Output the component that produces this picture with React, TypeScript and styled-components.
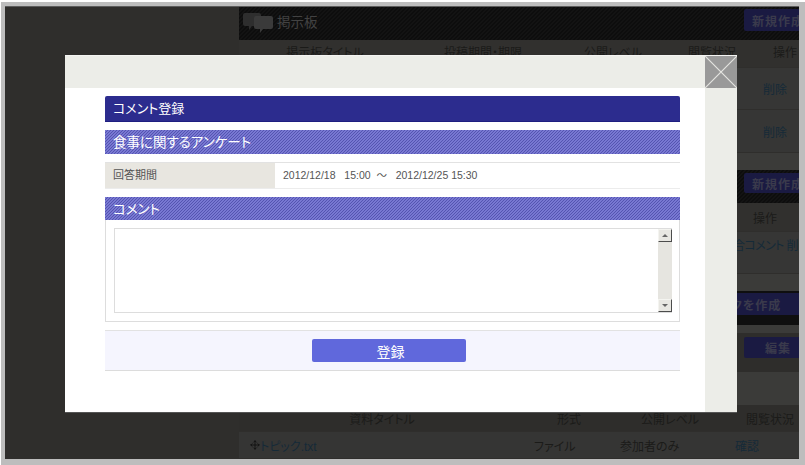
import * as React from 'react';
import styled, { createGlobalStyle } from 'styled-components';
import { Move } from 'lucide-react';

const GlobalStyle = createGlobalStyle`
    html, body {
        margin: 0;
        padding: 0;
        background: #fff;
        font-family: "Liberation Sans", "Noto Sans CJK JP", sans-serif;
        font-feature-settings: "palt";
    }
`;

const Frame = styled.div`
    position: relative;
    box-sizing: border-box;
    width: 804px;
    height: 463px;
    margin: 2px 0 0 1px;
    border: solid #bdbdbd;
    border-width: 4px 6px 6px 4px;
    background: #2f2e2c;
    overflow: hidden;

    &::after {
        content: '';
        position: absolute;
        left: 0;
        right: 0;
        top: 0;
        height: 1px;
        background: #5c5c5c;
    }
`;

const Page = styled.div`
    margin-left: 234px;
    display: flex;
    flex-direction: column;
    height: 100%;
`;

const HeadBar = styled.div<{ $h: number }>`
    box-sizing: border-box;
    height: ${p => p.$h}px;
    flex: none;
    display: flex;
    align-items: flex-start;
    justify-content: space-between;
    padding: 3px 0 0 4px;
    background: repeating-linear-gradient(135deg, #0d0d0d 0 1.414px, #131313 1.414px 2.828px);
    overflow: hidden;
`;

const HeadTitle = styled.div`
    display: flex;
    align-items: center;
    gap: 4px;
    padding-top: 3px;
    color: #424242;
    font-size: 13.5px;
    line-height: 22px;
`;

const DarkButton = styled.div<{ $w?: number; $h: number; $pad: number }>`
    box-sizing: border-box;
    width: ${p => p.$w ?? 55}px;
    height: ${p => p.$h}px;
    flex: none;
    display: flex;
    align-items: center;
    padding-left: ${p => p.$pad}px;
    background: #1a1a42;
    border-radius: 2px 0 0 2px;
    color: #3a3a4c;
    font-size: 12px;
    font-weight: 700;
    letter-spacing: 1px;
    white-space: nowrap;
    overflow: hidden;
`;

const TableRow = styled.div<{ $h: number; $bg: string; $pb?: number }>`
    flex: none;
    height: ${p => p.$h}px;
    padding-bottom: ${p => p.$pb ?? 0}px;
    background: ${p => p.$bg};
    border-bottom: 1px solid #2f2e2c;
    box-sizing: border-box;
    display: grid;
    align-items: center;
    color: #1b1b19;
    font-size: 12px;
    white-space: nowrap;
    overflow: hidden;
`;

const HeadRowA = styled(TableRow)`
    grid-template-columns: 172px 144px 116px 82px 46px;
    text-align: center;

    & > :last-child {
        text-align: right;
        padding-right: 2px;
    }
`;

const HeadRowB = styled(TableRow)`
    grid-template-columns: 500px 52px;
    text-align: center;
`;

const HeadRowC = styled(TableRow)`
    grid-template-columns: 286px 88px 114px 86px;
    text-align: center;
`;

const TopicRow = styled(TableRow)`
    grid-template-columns: 295px 86px 115px 60px;
`;

const LinkCell = styled.span<{ $pad?: number; $tight?: boolean }>`
    display: flex;
    align-items: center;
    color: #152a38;
    padding-left: ${p => p.$pad ?? 0}px;
    letter-spacing: ${p => (p.$tight ? '-0.6px' : 'normal')};
`;

const Spacer = styled.div<{ $h: number }>`
    flex: none;
    height: ${p => p.$h}px;
    background: #3b3b39;
`;

const ButtonBar = styled.div<{ $h: number; $bg: string; $pt: number }>`
    flex: none;
    box-sizing: border-box;
    height: ${p => p.$h}px;
    padding-top: ${p => p.$pt}px;
    background: ${p => p.$bg};
    display: flex;
    justify-content: flex-end;
`;

const Modal = styled.div`
    position: absolute;
    left: 60px;
    top: 49px;
    box-sizing: border-box;
    width: 672px;
    height: 358px;
    background: #fff;
    border-bottom: 1px solid #555;
    border-top: 1px solid #f4f4f2;
    display: flex;
    flex-direction: column;
`;

const ModalTop = styled.div`
    flex: none;
    height: 32px;
    background: #ecede8;
    display: flex;
    justify-content: flex-end;
`;

const CloseBox = styled.div`
    width: 32px;
    height: 32px;
    background: #999;
    line-height: 0;
`;

const ModalBody = styled.div`
    flex: 1;
    display: flex;
    min-height: 0;
`;

const ModalMain = styled.div`
    flex: 1;
    padding: 8px 25px 0 40px;
    display: flex;
    flex-direction: column;
`;

const RightBand = styled.div`
    flex: none;
    width: 32px;
    background: #ecede8;
`;

const TitleBar = styled.h1`
    box-sizing: border-box;
    margin: 0 0 8px;
    height: 26px;
    padding: 0 0 2px 8px;
    display: flex;
    align-items: center;
    background: #2c2c8e;
    border-bottom: 1px solid #1e1e80;
    border-radius: 2px 2px 0 0;
    color: #fff;
    font-size: 13px;
    font-weight: 400;
`;

const StripeBar = styled.h2<{ $h: number; $mb: number }>`
    box-sizing: border-box;
    margin: 0 0 ${p => p.$mb}px;
    height: ${p => p.$h}px;
    padding: 0 0 2px 8px;
    display: flex;
    align-items: center;
    background: repeating-linear-gradient(135deg, #5454b0 0 0.707px, #7878d2 0.707px 2.121px);
    color: #fff;
    font-size: 13.5px;
    font-weight: 400;
`;

const PeriodRow = styled.div`
    box-sizing: border-box;
    height: 27px;
    margin-bottom: 8px;
    display: flex;
    border-top: 1px solid #e2e2e2;
    border-bottom: 1px solid #ececec;
`;

const PeriodLabel = styled.div`
    width: 170px;
    flex: none;
    padding: 0 0 3px 8px;
    box-sizing: border-box;
    display: flex;
    align-items: center;
    background: #e8e6e0;
    color: #555;
    font-size: 11px;
`;

const PeriodValue = styled.div`
    padding: 0 0 3px 8px;
    display: flex;
    align-items: center;
    color: #555;
    font-size: 10.5px;
    white-space: pre;
`;

const CommentBox = styled.div`
    box-sizing: border-box;
    height: 102px;
    margin-bottom: 8px;
    padding: 8px 7px 8px 8px;
    border: 1px solid #ddd;
    border-top: none;
`;

const InputFrame = styled.div`
    box-sizing: border-box;
    height: 85px;
    display: flex;
    border: 1px solid #ddd;
    border-right: none;
`;

const InputArea = styled.textarea`
    flex: 1;
    border: none;
    outline: none;
    resize: none;
    padding: 0;
    background: #fff;
    overflow: hidden;
`;

const ScrollTrack = styled.div`
    flex: none;
    width: 14px;
    display: flex;
    flex-direction: column;
    justify-content: space-between;
    background: #e6e5e0;
`;

const ScrollArrow = styled.div<{ $down?: boolean }>`
    box-sizing: border-box;
    width: 14px;
    height: 13px;
    display: flex;
    align-items: center;
    justify-content: center;
    background: #e8e7e2;
    border: 1px solid;
    border-color: #f4f4f0 #4c4c4c #4c4c4c #f4f4f0;

    &::after {
        content: '';
        border-left: 3px solid transparent;
        border-right: 3px solid transparent;
        ${p => (p.$down ? 'border-top: 3px solid #666;' : 'border-bottom: 3px solid #666;')}
    }
`;

const Footer = styled.div`
    box-sizing: border-box;
    height: 41px;
    padding-right: 8px;
    display: flex;
    align-items: center;
    justify-content: center;
    background: #f5f5fe;
    border-top: 1px solid #e2e2e2;
    border-bottom: 1px solid #dcdcdc;
`;

const SubmitButton = styled.button`
    width: 154px;
    height: 23px;
    padding: 0 0 0 4px;
    border: none;
    border-radius: 2px;
    background: #6068dc;
    color: #fff;
    font-family: inherit;
    font-size: 14px;
`;

const BubbleIcon = () => (
    <svg width="30" height="20" viewBox="0 0 30 20">
        <path d="M2 0h14a2 2 0 0 1 2 2v9a2 2 0 0 1-2 2H9l-3 4v-4H2a2 2 0 0 1-2-2V2a2 2 0 0 1 2-2z" fill="#2e2e2e" />
        <path d="M13 3h15a2 2 0 0 1 2 2v9a2 2 0 0 1-2 2h-8l-3 4v-4h-4a2 2 0 0 1-2-2V5a2 2 0 0 1 2-2z" fill="#3a3a3a" />
    </svg>
);

const CloseIcon = () => (
    <svg width="32" height="32" viewBox="0 0 32 32" stroke="#e4e4e0" strokeWidth="1.2">
        <path d="M0 0L32 32M32 0L0 32" />
    </svg>
);

export default function App() {
    return (
        <>
            <GlobalStyle />
            <Frame>
                <Page>
                    <HeadBar $h={34}>
                        <HeadTitle><BubbleIcon />掲示板</HeadTitle>
                        <DarkButton $h={22} $pad={8}>新規作成</DarkButton>
                    </HeadBar>
                    <HeadRowA $h={28} $bg="#31302e" $pb={4}>
                        <span>掲示板タイトル</span>
                        <span>投稿期間・期限</span>
                        <span>公開レベル</span>
                        <span>閲覧状況</span>
                        <span>操作</span>
                    </HeadRowA>
                    <TableRow $h={42} $bg="#363635"><LinkCell $pad={524}>削除</LinkCell></TableRow>
                    <TableRow $h={43} $bg="#363635"><LinkCell $pad={524}>削除</LinkCell></TableRow>
                    <Spacer $h={17} />
                    <HeadBar $h={33}>
                        <span />
                        <DarkButton $h={20} $pad={8}>新規作成</DarkButton>
                    </HeadBar>
                    <HeadRowB $h={29} $bg="#31302e">
                        <span />
                        <span>操作</span>
                    </HeadRowB>
                    <TableRow $h={42} $bg="#363635" $pb={16}><LinkCell $pad={494} $tight>合コメント 削</LinkCell></TableRow>
                    <Spacer $h={17} />
                    <ButtonBar $h={34} $bg="#0f0f0f" $pt={2}>
                        <DarkButton $w={68} $h={22} $pad={0}>クを作成</DarkButton>
                    </ButtonBar>
                    <Spacer $h={8} />
                    <ButtonBar $h={39} $bg="#2e2d2b" $pt={4}>
                        <DarkButton $h={21} $pad={21}>編集</DarkButton>
                    </ButtonBar>
                    <Spacer $h={33} />
                    <HeadRowC $h={27} $bg="#2e2d2b">
                        <span>資料タイトル</span>
                        <span>形式</span>
                        <span>公開レベル</span>
                        <span>閲覧状況</span>
                    </HeadRowC>
                    <TopicRow $h={27} $bg="#353534">
                        <LinkCell $pad={11}><Move size={10} color="#101010" />トピック.txt</LinkCell>
                        <span>ファイル</span>
                        <span>参加者のみ</span>
                        <LinkCell>確認</LinkCell>
                    </TopicRow>
                </Page>
                <Modal>
                    <ModalTop>
                        <CloseBox><CloseIcon /></CloseBox>
                    </ModalTop>
                    <ModalBody>
                        <ModalMain>
                            <TitleBar>コメント登録</TitleBar>
                            <StripeBar $h={24} $mb={8}>食事に関するアンケート</StripeBar>
                            <PeriodRow>
                                <PeriodLabel>回答期間</PeriodLabel>
                                <PeriodValue>2012/12/18   15:00  〜   2012/12/25 15:30</PeriodValue>
                            </PeriodRow>
                            <StripeBar $h={23} $mb={0}>コメント</StripeBar>
                            <CommentBox>
                                <InputFrame>
                                    <InputArea aria-label="コメント" />
                                    <ScrollTrack>
                                        <ScrollArrow />
                                        <ScrollArrow $down />
                                    </ScrollTrack>
                                </InputFrame>
                            </CommentBox>
                            <Footer>
                                <SubmitButton>登録</SubmitButton>
                            </Footer>
                        </ModalMain>
                        <RightBand />
                    </ModalBody>
                </Modal>
            </Frame>
        </>
    );
}
